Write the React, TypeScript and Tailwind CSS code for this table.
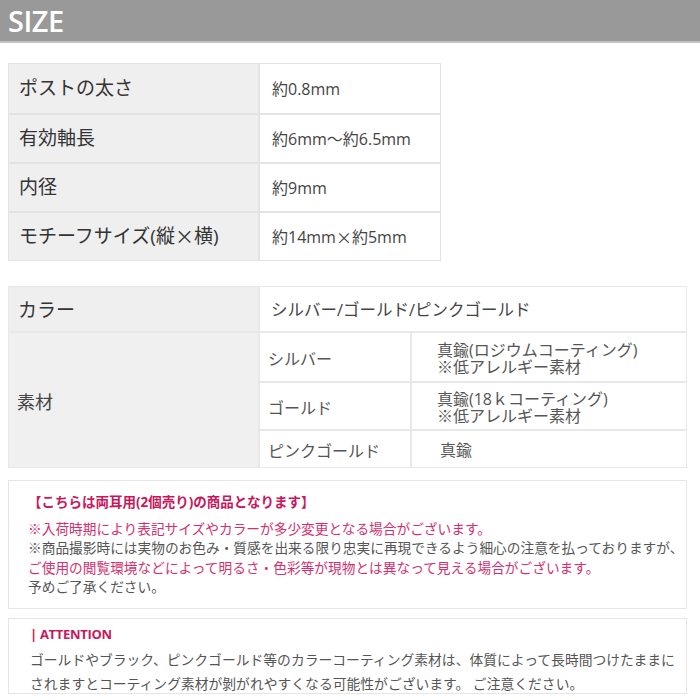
const jp = { fontFamily: '"Open Sans", "Noto Sans CJK JP", sans-serif' };
const cjk = { fontFamily: '"Noto Sans CJK JP", sans-serif' };

const X = () => <span style={cjk}>×</span>;

const sizeRows = [
  { label: "ポストの太さ", value: <>約0.8mm</> },
  { label: "有効軸長", value: <>約6mm〜約6.5mm</> },
  { label: "内径", value: <>約9mm</> },
  { label: <>モチーフサイズ(縦<X />横)</>, value: <>約14mm<X />約5mm</> },
];

const materials = [
  { color: "シルバー", lines: ["真鍮(ロジウムコーティング)", "※低アレルギー素材"], h: "h-[48px]" },
  { color: "ゴールド", lines: ["真鍮(18ｋコーティング)", "※低アレルギー素材"], h: "h-[48px]" },
  { color: "ピンクゴールド", lines: ["真鍮"], h: "h-[38px]" },
];

export default function App() {
  return (
    <div className="w-[700px] h-[700px] bg-white overflow-hidden" style={jp}>
      {/* header */}
      <div className="h-[43px] bg-[#999999] border-b-2 border-[#c4c4c4] flex items-center px-2">
        <span className="text-white text-[29px] font-semibold leading-none tracking-[-0.5px]">SIZE</span>
      </div>

      {/* size table */}
      <div className="ml-2 mt-[20px] w-[433px] border border-[#e3e3e3]">
        {sizeRows.map((r, i) => (
          <div key={i} className={`flex h-[49px] ${i > 0 ? "border-t-2 border-[#e3e3e3]" : ""}`}>
            <div className="w-[251px] bg-[#efefef] border-r-2 border-[#e3e3e3] flex items-center pl-[10px] text-[19px] text-[#333] whitespace-nowrap">
              {r.label}
            </div>
            <div className="flex-1 flex items-center pl-3 text-[16px] text-[#444] whitespace-nowrap">{r.value}</div>
          </div>
        ))}
      </div>

      {/* color / material table */}
      <div className="ml-2 mt-[25px] w-[679px] border border-[#e8e8e8]">
        <div className="flex h-[46px] border-b-2 border-[#e8e8e8]">
          <div className="w-[251px] bg-[#efefef] border-r-2 border-[#e8e8e8] flex items-center pl-[9px] pt-[3px] text-[19px] text-[#333]">
            カラー
          </div>
          <div className="flex-1 flex items-center pl-[11px] pt-[3px] text-[16.5px] text-[#444] whitespace-nowrap">
            シルバー/ゴールド/ピンクゴールド
          </div>
        </div>
        <div className="flex">
          <div className="w-[251px] bg-[#f0f0f0] border-r-2 border-[#e8e8e8] flex items-center pl-[8px] pt-[4px] text-[18px] text-[#444]">
            素材
          </div>
          <div className="flex-1 flex flex-col">
            {materials.map((m, i) => (
              <div key={m.color} className={`flex ${m.h} ${i > 0 ? "border-t-2 border-[#e8e8e8]" : ""}`}>
                <div className="w-[152px] border-r-2 border-[#e8e8e8] flex items-center pl-[8px] pt-[3px] text-[16px] text-[#555] whitespace-nowrap">
                  {m.color}
                </div>
                <div className={`flex-1 flex flex-col justify-center pt-[3px] ${i === 2 ? "pl-[28px]" : "pl-[25px]"} text-[16px] leading-[17px] text-[#555] whitespace-nowrap`}>
                  {m.lines.map((l) => (
                    <span key={l}>{l}</span>
                  ))}
                </div>
              </div>
            ))}
          </div>
        </div>
      </div>

      {/* notice */}
      <div className="ml-2 mt-[12px] w-[679px] h-[129px] border border-[#e6e6e6] pl-[19px] pt-[12px] text-[13.7px] leading-[19.6px] whitespace-nowrap">
        <div className="text-[#c9175b] font-bold text-[13.5px] mb-[6px]">
          【こちらは両耳用(2個売り)の商品となります】
        </div>
        <div className="text-[#d42f6e]">※入荷時期により表記サイズやカラーが多少変更となる場合がございます。</div>
        <div className="text-[#555]">
          ※商品撮影時には実物のお色み・質感を出来る限り忠実に再現できるよう細心の注意を払っておりますが、
        </div>
        <div className="text-[#d42f6e]">ご使用の閲覧環境などによって明るさ・色彩等が現物とは異なって見える場合がございます。</div>
        <div className="text-[#555]">予めご了承ください。</div>
      </div>

      {/* attention */}
      <div className="ml-2 mt-[9px] w-[679px] h-[76px] border border-[#e6e6e6] pl-[21px] pt-[5px] whitespace-nowrap">
        <div className="text-[#c9175b] font-bold text-[13px] leading-[20px] tracking-[-0.3px]">| ATTENTION</div>
        <div className="text-[#555] text-[13.8px] leading-[24px] mt-[4px]">
          ゴールドやブラック、ピンクゴールド等のカラーコーティング素材は、体質によって長時間つけたままに
          <br />
          されますとコーティング素材が剝がれやすくなる可能性がございます。 ご注意ください。
        </div>
      </div>
    </div>
  );
}
